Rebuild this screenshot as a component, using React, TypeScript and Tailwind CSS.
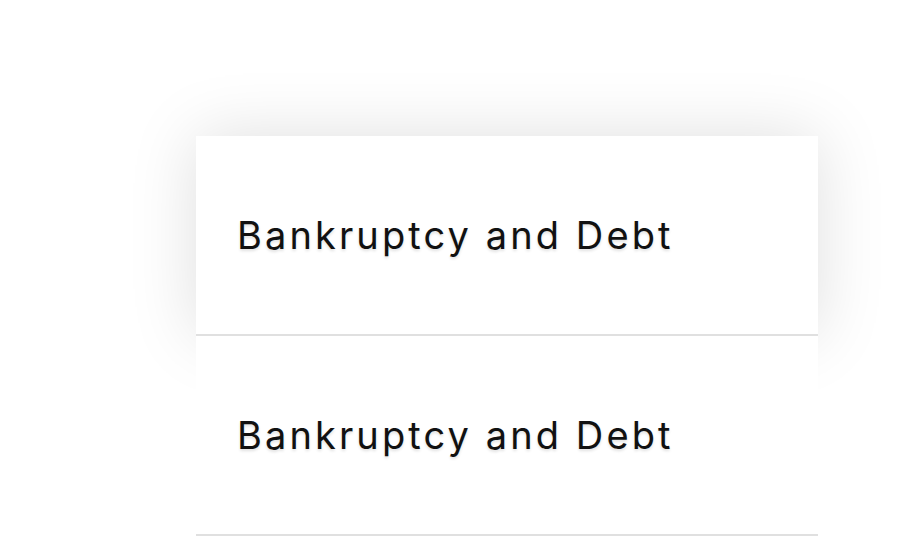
import React from "react";

const items = ["Bankruptcy and Debt", "Bankruptcy and Debt"];

export default function App() {
  return (
    <div className="min-h-[552px] w-full bg-white pt-[136px] pl-[196px]">
      <ul className="flex w-[622px] flex-col">
        {items.map((t, i) => (
          <li
            key={i}
            className={
              "relative flex h-[200px] items-center border-b-2 border-[#e0e0e0] bg-white pl-[41px] " +
              (i === 0 ? "shadow-[0_0_64px_rgba(0,0,0,0.13)]" : "")
            }
          >
            <span
              className="text-[38px] leading-none tracking-[3.1px] text-[#111] [text-shadow:0_2px_3px_rgba(0,0,0,0.12)]"
              style={{ fontFamily: "Inter, 'Noto Sans', sans-serif" }}
            >
              {t}
            </span>
          </li>
        ))}
      </ul>
    </div>
  );
}
